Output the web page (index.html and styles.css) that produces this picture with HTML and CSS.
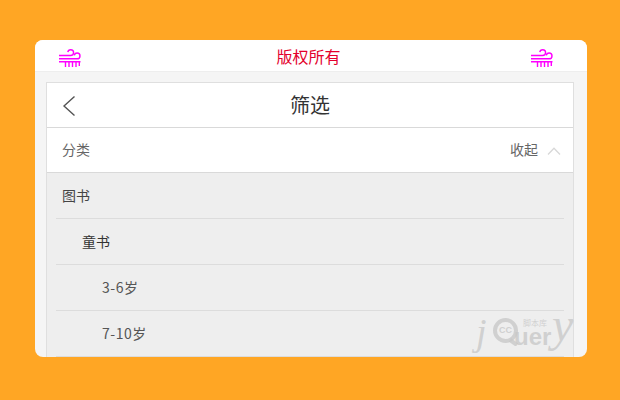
FILE: index.html
```html
<!DOCTYPE html>
<html lang="zh">
<head>
<meta charset="utf-8">
<title>筛选</title>
<link rel="stylesheet" href="styles.css">
</head>
<body>
<svg class="defs" width="0" height="0" aria-hidden="true">
  <symbol id="wind" viewBox="0 0 22 20">
    <g fill="none" stroke="currentColor" stroke-width="1.4">
      <path d="M0 7.500H11.500C13.600 7.500 14.600 6.300 14.600 4.600C14.600 2.900 13.300 1.700 11.700 1.700C10.200 1.700 9 2.700 8.800 4.200"/>
      <path d="M0 10.800H18C20 10.800 21 9.500 21 7.900C21 6.200 19.700 5 18.100 5C16.600 5 15.500 6 15.300 7.300"/>
      <path d="M0 13.800H21.500"/>
      <path d="M6.500 14V19M10 14V19M13.500 14V19M17 14V19M20.300 14V18"/>
    </g>
  </symbol>
</svg>
<main class="card">
  <header class="topbar">
    <svg class="wind"><use href="#wind"/></svg>
    <span class="brand">版权所有</span>
    <svg class="wind"><use href="#wind"/></svg>
  </header>
  <div class="stage">
    <section class="panel">
      <div class="panel-head">
        <svg class="back" viewBox="0 0 14 22"><path d="M12.500 1.500L2 11L12.500 20.500"/></svg>
        <h1 class="panel-title">筛选</h1>
      </div>
      <div class="section-row">
        <span>分类</span>
        <span class="toggle">收起<svg class="chev" viewBox="0 0 14 8"><path d="M1 7.500L7 1.200L13 7.500"/></svg></span>
      </div>
      <ul class="list">
        <li class="item">图书</li>
        <li class="item level-2">童书</li>
        <li class="item level-3">3-6岁</li>
        <li class="item level-3">7-10岁</li>
      </ul>
    </section>
  </div>
  <div class="mark">
    <svg class="mark-ring" viewBox="0 0 25 28"><circle cx="12.500" cy="12.500" r="10.500"/><path d="M17 22L24 27"/></svg>
    <span class="mark-cc">CC</span>
    <span class="mark-j">j</span>
    <span class="mark-cn">脚本库</span>
    <span class="mark-u">uer</span>
    <span class="mark-y">y</span>
  </div>
</main>
</body>
</html>
```
FILE: styles.css
```css
* { box-sizing: border-box; }
html, body { margin: 0; height: 400px; overflow: hidden; }
body {
  background: #ffa624;
  padding: 40px 33px 43px 35px;
  font-family: "Noto Sans CJK SC", "Noto Sans", sans-serif;
}
.defs { position: absolute; }
.card {
  position: relative;
  height: 317px;
  background: #f5f5f5;
  border-radius: 8px;
  overflow: hidden;
  display: flex;
  flex-direction: column;
}
.topbar {
  flex: none;
  height: 32px;
  background: #fff;
  border-bottom: 1px solid #eeeeee;
  display: flex;
  align-items: center;
  justify-content: space-between;
  padding: 0 34px 0 24px;
}
.wind { width: 22px; height: 20px; color: #f0f; margin-top: 5px; }
.brand { font-size: 16px; line-height: 24px; color: #e3002d; margin: 0 0 0 5px; }
.stage { flex: 1; padding: 10px 13px 0 11px; min-height: 0; }
.panel {
  border: 1px solid #dfdfdf;
  border-bottom: 0;
  background: #fff;
  height: 100%;
  overflow: hidden;
}
.panel-head {
  height: 45px;
  border-bottom: 1px solid #d9d9d9;
  display: flex;
  align-items: center;
  justify-content: center;
  position: relative;
}
.back {
  position: absolute;
  left: 15px;
  top: 12px;
  width: 14px;
  height: 22px;
  fill: none;
  stroke: #555;
  stroke-width: 1.4;
}
.panel-title { margin: 0; font-size: 20px; font-weight: 400; line-height: 28px; color: #333; }
.section-row {
  height: 45px;
  border-bottom: 1px solid #d9d9d9;
  display: flex;
  align-items: center;
  justify-content: space-between;
  padding: 0 12px 2px 15px;
  font-size: 14px;
  color: #666;
}
.toggle { display: flex; align-items: center; gap: 9px; }
.chev { width: 14px; height: 8px; fill: none; stroke: #d8d8d8; stroke-width: 1.3; margin-top: 4px; }
.list { list-style: none; margin: 0; padding: 0 9px; background: #eeeeee; height: 184px; }
.item {
  height: 46px;
  line-height: 45px;
  padding-left: 6px;
  font-size: 14px;
  color: #444;
  border-bottom: 1px solid #dcdcdc;
}
.level-2 { padding-left: 26px; color: #333; }
.level-3 { padding-left: 46px; color: #555; letter-spacing: 0.5px; }
.mark {
  position: absolute;
  left: 437px;
  top: 278px;
  width: 106px;
  height: 36px;
  color: rgba(200, 200, 200, 0.8);
  white-space: nowrap;
}
.mark-ring {
  position: absolute;
  left: 21px;
  top: 0;
  width: 25px;
  height: 28px;
  fill: none;
  stroke: rgba(200, 200, 200, 0.8);
  stroke-width: 4;
}
.mark-cc {
  position: absolute;
  left: 27px;
  top: 7px;
  font: 700 9px/11px "Liberation Sans", sans-serif;
}
.mark-j {
  position: absolute;
  left: 4px;
  top: -5px;
  font: italic 38px/38px "Liberation Serif", serif;
}
.mark-cn {
  position: absolute;
  left: 51px;
  top: 0;
  font-size: 8px;
  line-height: 9px;
}
.mark-u {
  position: absolute;
  left: 42px;
  top: 11px;
  font: 700 24px/16px "Liberation Sans", sans-serif;
}
.mark-y {
  position: absolute;
  left: 80px;
  top: -17px;
  font: italic 48px/48px "Liberation Serif", serif;
}
```
